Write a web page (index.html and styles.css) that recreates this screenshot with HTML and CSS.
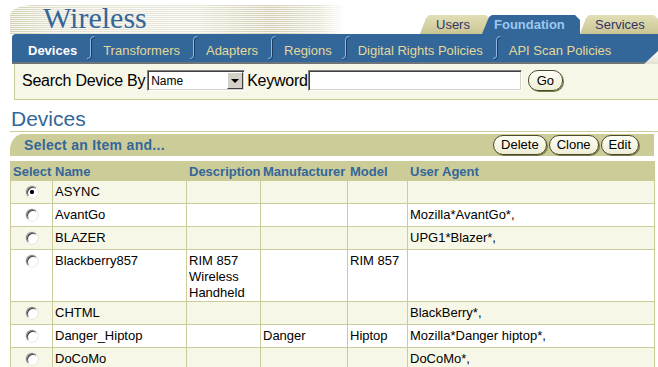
FILE: index.html
```html
<!DOCTYPE html>
<html lang="en">
<head>
    <meta charset="UTF-8">
    <title>Wireless - Devices</title>
    <link rel="stylesheet" href="styles.css">
</head>
<body>
    <div class="page">
        <div class="header">
            <div class="logo"><span class="logo-text">Wireless</span></div>
            <div class="tabs">
                <a class="tab tab-users">Users</a>
                <a class="tab tab-active">Foundation</a>
                <a class="tab tab-services">Services</a>
            </div>
        </div>

        <div class="nav-wrap">
            <div class="nav">
                <a class="nav-item current">Devices</a>
                <svg class="nav-sep" width="8" height="24" viewBox="0 0 8 24"><path class="sep-dark" d="M8 1.5 Q4.5 1.5 4.5 4.5 V20.5 Q4.5 23.5 1 23.5"/><path class="sep-light" d="M7.5 0.5 Q3.5 0.5 3.5 3.5 V20 Q3.5 22.5 0 22.5"/></svg>
                <a class="nav-item">Transformers</a>
                <svg class="nav-sep" width="8" height="24" viewBox="0 0 8 24"><path class="sep-dark" d="M8 1.5 Q4.5 1.5 4.5 4.5 V20.5 Q4.5 23.5 1 23.5"/><path class="sep-light" d="M7.5 0.5 Q3.5 0.5 3.5 3.5 V20 Q3.5 22.5 0 22.5"/></svg>
                <a class="nav-item">Adapters</a>
                <svg class="nav-sep" width="8" height="24" viewBox="0 0 8 24"><path class="sep-dark" d="M8 1.5 Q4.5 1.5 4.5 4.5 V20.5 Q4.5 23.5 1 23.5"/><path class="sep-light" d="M7.5 0.5 Q3.5 0.5 3.5 3.5 V20 Q3.5 22.5 0 22.5"/></svg>
                <a class="nav-item">Regions</a>
                <svg class="nav-sep" width="8" height="24" viewBox="0 0 8 24"><path class="sep-dark" d="M8 1.5 Q4.5 1.5 4.5 4.5 V20.5 Q4.5 23.5 1 23.5"/><path class="sep-light" d="M7.5 0.5 Q3.5 0.5 3.5 3.5 V20 Q3.5 22.5 0 22.5"/></svg>
                <a class="nav-item">Digital Rights Policies</a>
                <svg class="nav-sep" width="8" height="24" viewBox="0 0 8 24"><path class="sep-dark" d="M8 1.5 Q4.5 1.5 4.5 4.5 V20.5 Q4.5 23.5 1 23.5"/><path class="sep-light" d="M7.5 0.5 Q3.5 0.5 3.5 3.5 V20 Q3.5 22.5 0 22.5"/></svg>
                <a class="nav-item">API Scan Policies</a>
            </div>
        </div>

        <form class="search-box" onsubmit="return false">
            <label>Search Device By</label>
            <span class="select-box">
                <select id="searchBy">
                    <option>Name</option>
                    <option>Model</option>
                    <option>Manufacturer</option>
                </select>
                <span class="select-btn"></span>
            </span>
            <label class="kw-label">Keyword</label>
            <input type="text" class="keyword" id="keyword">
            <button class="pill go">Go</button>
        </form>

        <h2 class="title">Devices</h2>

        <div class="action-bar">
            <span class="action-label">Select an Item and...</span>
            <div class="actions">
                <button class="pill">Delete</button>
                <button class="pill">Clone</button>
                <button class="pill">Edit</button>
            </div>
        </div>

        <table class="grid">
            <colgroup>
                <col style="width:42px">
                <col style="width:134px">
                <col style="width:74px">
                <col style="width:87px">
                <col style="width:60px">
                <col>
            </colgroup>
            <thead>
                <tr>
                    <th>Select</th>
                    <th>Name</th>
                    <th>Description</th>
                    <th>Manufacturer</th>
                    <th>Model</th>
                    <th>User Agent</th>
                </tr>
            </thead>
            <tbody>
                <tr>
                    <td class="sel"><input type="radio" name="device" checked></td>
                    <td>ASYNC</td><td></td><td></td><td></td><td></td>
                </tr>
                <tr>
                    <td class="sel"><input type="radio" name="device"></td>
                    <td>AvantGo</td><td></td><td></td><td></td><td>Mozilla*AvantGo*,</td>
                </tr>
                <tr>
                    <td class="sel"><input type="radio" name="device"></td>
                    <td>BLAZER</td><td></td><td></td><td></td><td>UPG1*Blazer*,</td>
                </tr>
                <tr>
                    <td class="sel"><input type="radio" name="device"></td>
                    <td>Blackberry857</td><td>RIM 857<br>Wireless<br>Handheld</td><td></td><td>RIM 857</td><td></td>
                </tr>
                <tr>
                    <td class="sel"><input type="radio" name="device"></td>
                    <td>CHTML</td><td></td><td></td><td></td><td>BlackBerry*,</td>
                </tr>
                <tr>
                    <td class="sel"><input type="radio" name="device"></td>
                    <td>Danger_Hiptop</td><td></td><td>Danger</td><td>Hiptop</td><td>Mozilla*Danger hiptop*,</td>
                </tr>
                <tr>
                    <td class="sel"><input type="radio" name="device"></td>
                    <td>DoCoMo</td><td></td><td></td><td></td><td>DoCoMo*,</td>
                </tr>
            </tbody>
        </table>
    </div>
</body>
</html>
```

FILE: styles.css
```css
html {
    overflow: hidden;
}
body {
    margin: 0;
    background: #fff;
    font-family: "Liberation Sans", Arial, sans-serif;
    font-size: 13px;
    color: #000;
}
.page {
    padding-left: 10px;
}

/* header: logo + global tabs */
.header {
    display: flex;
    height: 34px;
}
.logo {
    position: relative;
    margin-top: 5px;
    width: 335px;
    height: 29px;
    padding-left: 33px;
    box-sizing: border-box;
}
.logo::before {
    content: "";
    position: absolute;
    inset: 0;
    border-top-left-radius: 22px 10px;
    background: repeating-linear-gradient(to bottom, #d3d0b6 0 1px, #f6f5ee 1px 2px);
    -webkit-mask-image: linear-gradient(to right, #000 0, rgba(0,0,0,0.6) 14%, rgba(0,0,0,0.5) 55%, #000 78%, rgba(0,0,0,0.6) 92%, transparent 100%);
    mask-image: linear-gradient(to right, #000 0, rgba(0,0,0,0.6) 14%, rgba(0,0,0,0.5) 55%, #000 78%, rgba(0,0,0,0.6) 92%, transparent 100%);
}
.logo-text {
    position: relative;
    font-family: "Liberation Serif", "Times New Roman", serif;
    font-size: 30px;
    line-height: 26px;
    color: #336699;
}
.tabs {
    display: flex;
    align-self: flex-end;
    margin-left: auto;
    height: 19px;
}
.tab {
    display: block;
    height: 19px;
    line-height: 19px;
    box-sizing: border-box;
    font-size: 13px;
    color: #333366;
    cursor: pointer;
}
.tab-users,
.tab-services {
    background: linear-gradient(#e2dfb6, #c9c593);
    clip-path: polygon(0 100%, 6px 3px, 9px 0, calc(100% - 4px) 0, 100% 4px, 100% 100%);
}
.tab-users {
    width: 70px;
    padding-left: 16px;
}
.tab-services {
    width: 78px;
    padding-left: 15px;
}
.tab-active {
    position: relative;
    z-index: 1;
    width: 98px;
    margin-left: -8px;
    padding-left: 12px;
    background: #336699;
    color: #9cc8f0;
    font-weight: bold;
    clip-path: polygon(0 100%, 7px 2px, 10px 0, calc(100% - 5px) 0, 100% 5px, 100% 100%);
}

/* level 2 navigation */
.nav-wrap {
    margin-left: 2px;
    background: linear-gradient(to bottom, #fff 55%, #e4e2d2);
}
.nav {
    display: flex;
    align-items: center;
    height: 30px;
    padding: 6px 0 2px 16px;
    box-sizing: border-box;
    background: #336699;
    border-bottom: 2px solid #6f7478;
    border-top-left-radius: 4px;
    clip-path: polygon(0 0, 100% 0, 100% 17px, calc(100% - 14px) 100%, 0 100%);
}
.nav-item {
    color: #e3d998;
    font-size: 13px;
    white-space: nowrap;
    cursor: pointer;
}
.nav-item.current {
    color: #fff;
    font-weight: bold;
}
.nav-sep {
    align-self: flex-end;
    margin: 0 8px 0 10px;
    fill: none;
}
.sep-dark {
    stroke: #1d3c61;
    stroke-width: 1;
}
.sep-light {
    stroke: #8fb8e4;
    stroke-width: 1;
}

/* search */
.search-box {
    display: flex;
    align-items: center;
    margin: 0 0 0 4px;
    padding: 6px 0 8px 7px;
    background: #f7f7e7;
    border-left: 1px solid #cccc99;
    border-bottom: 1px solid #cccc99;
}
.search-box label {
    font-size: 16px;
    line-height: 21px;
    letter-spacing: -0.25px;
}
.select-box {
    display: flex;
    align-items: center;
    width: 98px;
    height: 21px;
    margin-left: 2px;
    box-sizing: border-box;
    background: #fff;
    border: 1px solid;
    border-color: #808080 #fff #fff #808080;
    box-shadow: inset 1px 1px 0 #404040, inset -1px -1px 0 #d4d0c8;
    padding: 1px 1px 1px 2px;
}
.select-box select {
    flex: 1;
    min-width: 0;
    -webkit-appearance: none;
    appearance: none;
    border: 0;
    outline: 0;
    background: transparent;
    font-family: "Liberation Sans", Arial, sans-serif;
    font-size: 12px;
    padding: 0 0 0 1px;
}
.select-btn {
    position: relative;
    width: 16px;
    height: 17px;
    box-sizing: border-box;
    background: #d4d0c8;
    border: 1px solid;
    border-color: #fff #404040 #404040 #fff;
}
.select-btn::after {
    content: "";
    position: absolute;
    left: 3px;
    top: 6px;
    border-left: 4px solid transparent;
    border-right: 4px solid transparent;
    border-top: 4px solid #000;
}
.kw-label {
    margin-left: 2px;
}
.keyword {
    width: 214px;
    height: 21px;
    margin: 0;
    padding: 0 2px;
    box-sizing: border-box;
    background: #fff;
    border: 1px solid;
    border-color: #808080 #fff #fff #808080;
    box-shadow: inset 1px 1px 0 #404040, inset -1px -1px 0 #d4d0c8;
    outline: 0;
    font-size: 13px;
}
.pill {
    height: 20px;
    padding: 0 7px;
    border: 1px solid #4a4a2a;
    border-radius: 10px;
    background: linear-gradient(#fffff6, #eeedd6);
    box-shadow: 1px 1px 0 #7a7a48;
    font-family: "Liberation Sans", Arial, sans-serif;
    font-size: 13px;
    line-height: 18px;
    color: #000;
    cursor: pointer;
}
.pill.go {
    margin-left: 6px;
    padding: 0 8px;
    height: 21px;
}

/* page title */
.title {
    margin: 7px 0 0;
    padding-left: 1px;
    font-size: 21px;
    font-weight: normal;
    line-height: 24px;
    color: #336699;
    border-bottom: 1px solid #cccc99;
}

/* action bar */
.action-bar {
    display: flex;
    justify-content: space-between;
    align-items: center;
    height: 22px;
    margin: 2px 4px 0 0;
    padding-left: 14px;
    background: #cccc99;
    border-top-left-radius: 13px 16px;
}
.action-label {
    font-size: 14px;
    font-weight: bold;
    letter-spacing: 0.3px;
    line-height: 22px;
    color: #336699;
}
.actions {
    display: flex;
    gap: 2px;
    padding-right: 15px;
}

/* table */
.grid {
    width: 645px;
    margin-top: 5px;
    border-collapse: collapse;
    table-layout: fixed;
}
.grid th,
.grid td {
    border: 1px solid #cccc99;
    text-align: left;
    vertical-align: top;
    line-height: 16px;
}
.grid th {
    padding: 2px 2px 0;
    background: #cccc99;
    color: #336699;
    font-weight: bold;
    white-space: nowrap;
    overflow: hidden;
}
.grid td {
    padding: 3px 2px 0;
}
.grid tbody tr:nth-child(odd) {
    background: #f7f7e7;
}
.grid tbody tr:nth-child(even) {
    background: #fff;
}
.grid td.sel {
    height: 19px;
    text-align: center;
}
.sel input {
    -webkit-appearance: none;
    appearance: none;
    display: inline-block;
    vertical-align: top;
    width: 12px;
    height: 12px;
    margin: 2px 0 0;
    box-sizing: border-box;
    border: 1px solid;
    border-color: #808080 #fff #fff #808080;
    border-radius: 50%;
    background: #fff;
    box-shadow: inset 1px 1px 0 #404040, 0 0 0 0.5px #d4d0c8;
}
.sel input:checked {
    background: radial-gradient(circle, #000 1.8px, #fff 2.4px);
}
```
